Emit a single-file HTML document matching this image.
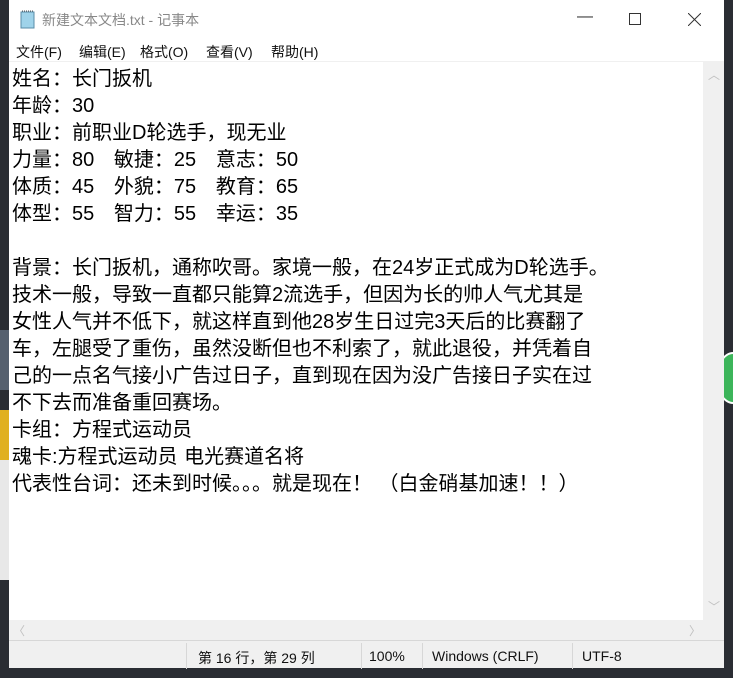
<!DOCTYPE html>
<html><head><meta charset="utf-8"><style>
*{margin:0;padding:0;box-sizing:border-box}
body{width:733px;height:678px;background:#2a2d33;position:relative;overflow:hidden;font-family:"Liberation Sans","Noto Sans CJK SC",sans-serif}
.win{position:absolute;left:9px;top:0;width:715px;height:668px;background:#fff}
.title{position:absolute;left:0;top:0;width:715px;height:38px;background:#fff;color:#888;font-size:14px}
.title .t{position:absolute;left:33px;top:10px}
.menu{position:absolute;left:0;top:38px;width:715px;height:24px;font-size:14px;color:#111}
.menu span{position:absolute;top:4px}
.edit{position:absolute;left:0;top:62px;width:694px;height:558px;background:#fff;font-size:20px;line-height:27px;color:#000;padding:4px 0 0 3px;white-space:pre;word-spacing:1px}
.vs{position:absolute;left:694px;top:62px;width:21px;height:558px;background:#f0f0f0}
.hs{position:absolute;left:0;top:620px;width:715px;height:20px;background:#f0f0f0}
.st{position:absolute;left:0;top:640px;width:715px;height:28px;background:#f0f0f0;border-top:1px solid #d7d7d7;font-size:14px;color:#111}
.st span{position:absolute;top:7px}
.st i{position:absolute;top:2px;width:1px;height:26px;background:#d7d7d7}
.arr{position:absolute;color:#c0c0c0;font-size:12px}
</style></head><body>
<div style="position:absolute;left:0;top:330px;width:9px;height:60px;background:#55606e"></div>
<div style="position:absolute;left:0;top:410px;width:9px;height:50px;background:#e0b020"></div>
<div style="position:absolute;left:0;top:460px;width:9px;height:120px;background:#e8e8e8"></div>
<div style="position:absolute;left:716px;top:352px;width:34px;height:52px;border-radius:50%;background:#3cb55a;border:2px solid #fff"></div>
<div class="win">
<div class="title">
<svg style="position:absolute;left:10px;top:9px" width="18" height="20"><rect x="2" y="3" width="13" height="16" fill="#9fd3ea" stroke="#5a8ca8"/><line x1="3" y1="2" x2="14" y2="2" stroke="#555" stroke-dasharray="1,1"/></svg>
<span class="t">新建文本文档.txt - 记事本</span>
<span style="position:absolute;left:568px;top:8px;font-size:16px;color:#333">—</span>
<div style="position:absolute;left:620px;top:13px;width:12px;height:12px;border:1px solid #333"></div>
<svg style="position:absolute;left:679px;top:13px" width="13" height="13"><path d="M0 0L13 13M13 0L0 13" stroke="#333" stroke-width="1"/></svg>
</div>
<div class="menu"><span style="left:7px">文件(F)</span><span style="left:70px">编辑(E)</span><span style="left:131px">格式(O)</span><span style="left:197px">查看(V)</span><span style="left:262px">帮助(H)</span></div>
<div style="position:absolute;left:0;top:61px;width:715px;height:1px;background:#f0f0f0"></div>
<div class="edit">姓名：长门扳机
年龄：30
职业：前职业D轮选手，现无业
力量：80   敏捷：25   意志：50
体质：45   外貌：75   教育：65
体型：55   智力：55   幸运：35

背景：长门扳机，通称吹哥。家境一般，在24岁正式成为D轮选手。
技术一般，导致一直都只能算2流选手，但因为长的帅人气尤其是
女性人气并不低下，就这样直到他28岁生日过完3天后的比赛翻了
车，左腿受了重伤，虽然没断但也不利索了，就此退役，并凭着自
己的一点名气接小广告过日子，直到现在因为没广告接日子实在过
不下去而准备重回赛场。
卡组：方程式运动员
魂卡:方程式运动员 电光赛道名将
代表性台词：还未到时候。。。就是现在！ （白金硝基加速！！）</div>
<div class="vs"><span class="arr" style="left:5px;top:4px">︿</span><span class="arr" style="left:5px;top:536px">﹀</span></div>
<div class="hs"><span class="arr" style="left:4px;top:2px">〈</span><span class="arr" style="left:680px;top:2px">〉</span></div>
<div class="st"><i style="left:177px"></i><i style="left:352px"></i><i style="left:413px"></i><i style="left:563px"></i>
<span style="left:189px">第 16 行，第 29 列</span><span style="left:360px">100%</span><span style="left:423px">Windows (CRLF)</span><span style="left:573px">UTF-8</span></div>
</div>
</body></html>
